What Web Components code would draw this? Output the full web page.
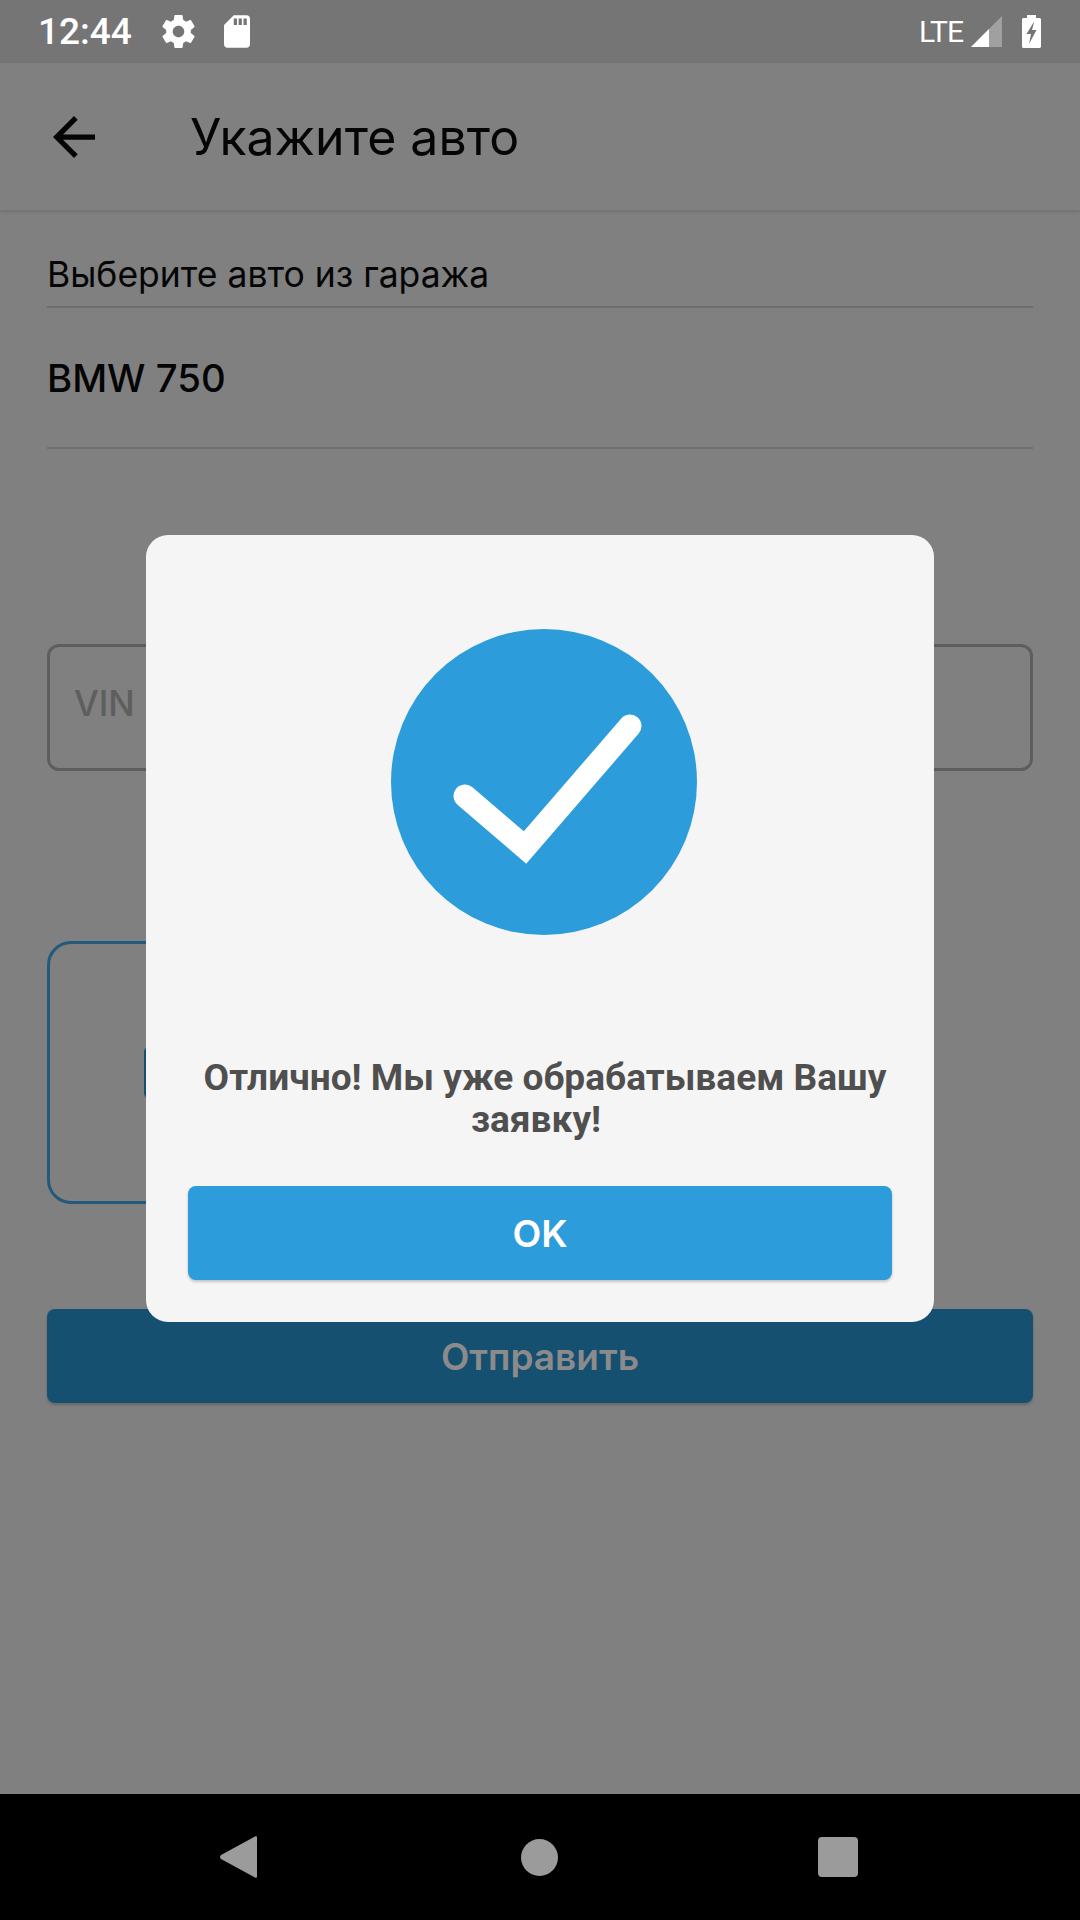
<!DOCTYPE html>
<html lang="ru">
<head>
<meta charset="utf-8">
<title>Укажите авто</title>
<style>
    html, body { margin: 0; padding: 0; background: #808080; }
</style>
</head>
<body>
<phone-page>
    <status-bar time="12:44"></status-bar>
    <app-bar>Укажите авто</app-bar>
    <garage-select label="Выберите авто из гаража">BMW 750</garage-select>
    <vin-field>VIN номер автомобиля</vin-field>
    <upload-box></upload-box>
    <action-button dimmed>Отправить</action-button>
    <nav-bar slot="bottom"></nav-bar>
    <success-dialog slot="overlay">
        <span class="first">Отлично! Мы уже обрабатываем Вашу</span>
        <span class="second">заявку!</span>
    </success-dialog>
</phone-page>

<script>
function define(name, css, html) {
    const template = document.createElement("template");
    template.innerHTML = `<style>*, *::before, *::after { box-sizing: border-box; } ${css}</style>${html}`;
    customElements.define(name, class extends HTMLElement {
        constructor() {
            super();
            this.attachShadow({ mode: "open" });
            this.shadowRoot.appendChild(template.content.cloneNode(true));
            this.shadowRoot.querySelectorAll("[data-attr]").forEach((node) => {
                node.textContent = this.getAttribute(node.dataset.attr);
            });
        }
    });
}

define("phone-page", `
    :host {
        display: flex;
        flex-direction: column;
        position: relative;
        width: 1080px;
        height: 1920px;
        overflow: hidden;
        background: #808080;
        color: #050505;
        font-family: Inter, "Noto Sans", sans-serif;
    }
    main { flex: 1; display: flex; flex-direction: column; }
`, `<main><slot></slot></main><slot name="bottom"></slot><slot name="overlay"></slot>`);

define("status-bar", `
    :host {
        display: flex;
        align-items: center;
        height: 63px;
        padding: 0 39px 0 38px;
        background: #757575;
        color: #fff;
    }
    .time { font: 500 37px Roboto, sans-serif; margin-right: 30px; }
    .sd { margin-left: 29px; }
    .lte { margin-left: auto; font: 400 30px Roboto, sans-serif; letter-spacing: -1px; }
    .signal { margin-left: 8px; }
    .battery { margin-left: 20px; }
    svg { display: block; fill: #fff; }
`, `
    <span class="time" data-attr="time"></span>
    <svg class="gear" width="33" height="33" viewBox="2 2 20 20"><path d="M19.43 12.98c.04-.32.07-.64.07-.98s-.03-.66-.07-.98l2.11-1.65c.19-.15.24-.42.12-.64l-2-3.46c-.12-.22-.39-.3-.61-.22l-2.49 1c-.52-.4-1.08-.73-1.69-.98l-.38-2.65C14.46 2.18 14.25 2 14 2h-4c-.25 0-.46.18-.49.42l-.38 2.65c-.61.25-1.17.59-1.69.98l-2.49-1c-.23-.09-.49 0-.61.22l-2 3.46c-.13.22-.07.49.12.64l2.11 1.65c-.04.32-.07.65-.07.98s.03.66.07.98l-2.11 1.65c-.19.15-.24.42-.12.64l2 3.46c.12.22.39.3.61.22l2.49-1c.52.4 1.08.73 1.69.98l.38 2.65c.03.24.24.42.49.42h4c.25 0 .46-.18.49-.42l.38-2.65c.61-.25 1.17-.59 1.69-.98l2.49 1c.23.09.49 0 .61-.22l2-3.46c.12-.22.07-.49-.12-.64l-2.11-1.65zM12 15.5c-1.93 0-3.5-1.57-3.5-3.5s1.57-3.5 3.5-3.5 3.5 1.57 3.5 3.5-1.57 3.5-3.5 3.5z"/></svg>
    <svg class="sd" width="26" height="33" viewBox="4 2 16 20"><path d="M18 2h-8L4.02 8 4 20c0 1.1.9 2 2 2h12c1.1 0 2-.9 2-2V4c0-1.1-.9-2-2-2zm-6 6h-2V4h2v4zm3 0h-2V4h2v4zm3 0h-2V4h2v4z"/></svg>
    <span class="lte">LTE</span>
    <svg class="signal" width="31" height="31" viewBox="0 0 31 31">
        <polygon points="31,0 31,31 0,31" fill="#a0a0a0"/>
        <polygon points="18,13 18,31 0,31"/>
    </svg>
    <svg class="battery" width="19" height="33" viewBox="0 0 19 33">
        <path d="M5 0h9v3h3.5c.8 0 1.5.7 1.5 1.5v27c0 .8-.7 1.5-1.5 1.5h-16C.7 33 0 32.300 0 31.500v-27C0 3.700.7 3 1.500 3H5z"/>
        <path d="M11.500 7.500 4.500 19h4.500l-2 10 7.500-14h-4.500l2-7.500z" fill="#757575"/>
    </svg>
`);

define("app-bar", `
    :host {
        display: flex;
        align-items: center;
        height: 147px;
        padding-left: 53px;
        background: #808080;
        box-shadow: 0 2px 3px rgba(0, 0, 0, 0.12);
        font-size: 50px;
    }
    svg { display: block; fill: #050505; margin-right: 95px; }
`, `
    <svg width="42" height="42" viewBox="4 4 16 16"><path d="M20 11H7.830l5.590-5.590L12 4l-8 8 8 8 1.410-1.410L7.830 13H20v-2z"/></svg>
    <slot></slot>
`);

define("garage-select", `
    :host { display: block; padding: 0 47px; }
    .label {
        display: flex;
        align-items: flex-end;
        height: 98px;
        padding-bottom: 11px;
        border-bottom: 2px solid #6e6e6e;
        font-size: 35.5px;
        line-height: 40px;
    }
    .value {
        display: flex;
        align-items: center;
        height: 141px;
        border-bottom: 2px solid #6e6e6e;
        font-size: 38.3px;
        font-weight: 550;
    }
`, `<div class="label" data-attr="label"></div><div class="value"><slot></slot></div>`);

define("vin-field", `
    :host {
        display: flex;
        align-items: center;
        height: 127px;
        margin: 195px 47px 0;
        padding: 0 24px 10px;
        border: 3px solid #5e5e5e;
        border-radius: 12px;
        color: #5e5e5e;
        font-size: 35px;
        font-weight: 500;
        box-sizing: border-box;
    }
`, `<slot></slot>`);

define("upload-box", `
    :host {
        display: flex;
        align-items: center;
        width: 560px;
        height: 263px;
        margin: 170px 0 0 47px;
        padding-left: 94px;
        border: 3px solid #23597a;
        border-radius: 24px;
        box-sizing: border-box;
    }
    div { width: 300px; height: 53px; border-radius: 6px; background: #165071; }
`, `<div></div>`);

define("action-button", `
    :host {
        display: flex;
        align-items: center;
        justify-content: center;
        height: 94px;
        border-radius: 8px;
        background: #2d9cdb;
        color: #fff;
        font-size: 37.5px;
        font-weight: 600;
        box-shadow: 0 2px 3px rgba(0, 0, 0, 0.2);
    }
    :host([dimmed]) {
        margin: 105px 47px 0;
        background: #165071;
        color: #8b8b8b;
        font-size: 37px;
    }
`, `<slot></slot>`);

define("nav-bar", `
    :host {
        display: flex;
        align-items: center;
        height: 126px;
        background: #000;
    }
    svg { display: block; fill: #9b9b9b; }
    .wrap { display: grid; grid-template-columns: 37px 264px 37px 260px 40px; align-items: center; margin-left: 220px; }
`, `
    <div class="wrap">
        <svg width="37" height="42" viewBox="0 0 37 42"><path d="M35 .5c1-.8 2-.2 2 1v39c0 1.200-1 1.800-2 1L1 23c-1.300-1-1.300-3 0-4z"/></svg>
        <span></span>
        <svg width="37" height="37" viewBox="0 0 37 37"><circle cx="18.500" cy="18.500" r="18.500"/></svg>
        <span></span>
        <svg width="40" height="40" viewBox="0 0 40 40"><rect width="40" height="40" rx="4"/></svg>
    </div>
`);

define("success-dialog", `
    :host {
        position: absolute;
        left: 146px;
        top: 535px;
        display: flex;
        flex-direction: column;
        width: 788px;
        height: 787px;
        padding: 94px 42px 42px;
        border-radius: 22px;
        background: #f5f5f5;
        box-sizing: border-box;
    }
    svg { display: block; align-self: center; margin-left: 8px; }
    .message {
        display: flex;
        flex-direction: column;
        align-items: center;
        height: 85px;
        margin: 122px 0 44px;
        color: #4f4f4f;
        font: 700 37.1px/42px Roboto, sans-serif;
        white-space: nowrap;
    }
    ::slotted(.first) { margin-left: 10px; }
    ::slotted(.second) { margin-right: 8px; }
`, `
    <svg width="306" height="306" viewBox="0 0 306 306">
        <circle cx="153" cy="153" r="153" fill="#2d9cdb"/>
        <polyline points="74,167 134,218.500 239,97" fill="none" stroke="#fff" stroke-width="23" stroke-linecap="round" stroke-linejoin="miter"/>
    </svg>
    <div class="message"><slot></slot></div>
    <action-button>OK</action-button>
`);
</script>
</body>
</html>
